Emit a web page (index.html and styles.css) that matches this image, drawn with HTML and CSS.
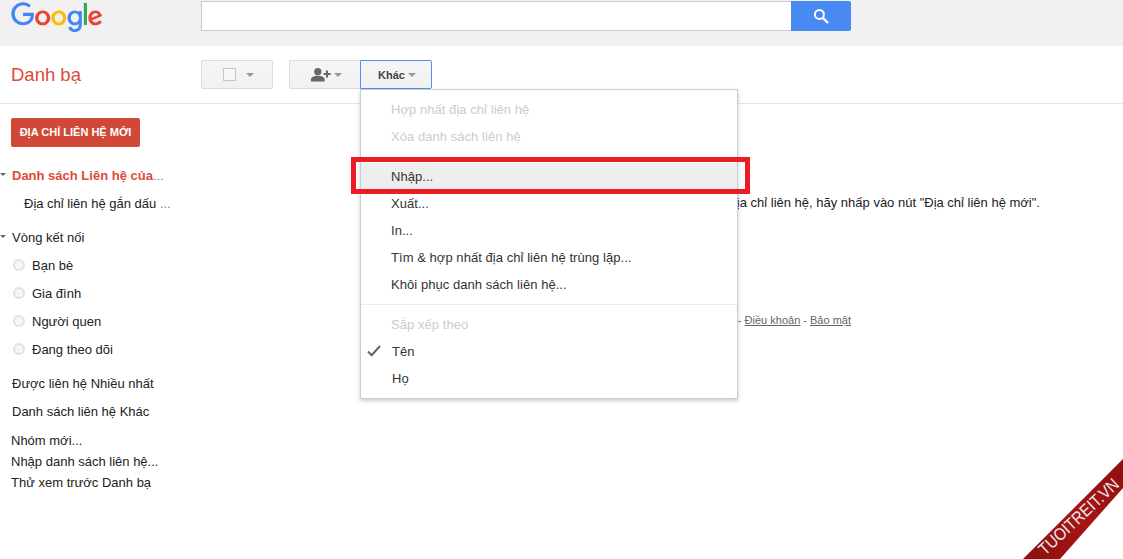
FILE: index.html
```html
<!DOCTYPE html>
<html lang="vi">
<head>
<meta charset="utf-8">
<title>Danh bạ</title>
<link rel="stylesheet" href="styles.css">
</head>
<body>
<div class="page">
  <header class="topbar">
    <svg class="logo" viewBox="0 0 272 92" width="92" height="31" aria-label="Google">
      <path fill="#EA4335" d="M115.75 47.18c0 12.77-9.99 22.18-22.25 22.18s-22.25-9.41-22.25-22.18C71.25 34.32 81.24 25 93.5 25s22.25 9.32 22.25 22.18zm-9.74 0c0-7.98-5.79-13.44-12.51-13.44S80.99 39.2 80.99 47.18c0 7.9 5.79 13.44 12.51 13.44s12.51-5.55 12.51-13.44z"/>
      <path fill="#FBBC05" d="M163.75 47.18c0 12.77-9.99 22.18-22.25 22.18s-22.25-9.41-22.25-22.18c0-12.85 9.99-22.18 22.25-22.18s22.25 9.32 22.25 22.18zm-9.74 0c0-7.98-5.79-13.44-12.51-13.44s-12.51 5.46-12.51 13.44c0 7.9 5.79 13.44 12.51 13.44s12.51-5.55 12.51-13.44z"/>
      <path fill="#4285F4" d="M209.75 26.34v39.82c0 16.38-9.66 23.07-21.08 23.07-10.75 0-17.22-7.19-19.66-13.07l8.48-3.53c1.51 3.61 5.21 7.87 11.17 7.87 7.31 0 11.84-4.51 11.84-13v-3.19h-.34c-2.18 2.69-6.38 5.04-11.68 5.04-11.09 0-21.25-9.66-21.25-22.09 0-12.52 10.16-22.26 21.25-22.26 5.29 0 9.49 2.35 11.68 4.96h.34v-3.61h9.25zm-8.56 20.92c0-7.81-5.21-13.52-11.84-13.52-6.72 0-12.35 5.71-12.35 13.52 0 7.73 5.63 13.36 12.35 13.36 6.63 0 11.84-5.63 11.84-13.36z"/>
      <path fill="#34A853" d="M225 3v65h-9.5V3h9.5z"/>
      <path fill="#EA4335" d="M262.02 54.48l7.56 5.04c-2.44 3.61-8.32 9.83-18.48 9.83-12.6 0-22.01-9.74-22.01-22.18 0-13.19 9.49-22.18 20.92-22.18 11.51 0 17.14 9.16 18.98 14.11l1.01 2.52-29.65 12.28c2.27 4.45 5.8 6.72 10.75 6.72 4.96 0 8.4-2.44 10.92-6.14zm-23.27-7.98l19.82-8.23c-1.09-2.77-4.37-4.7-8.23-4.7-4.95 0-11.84 4.37-11.59 12.93z"/>
      <path fill="#4285F4" d="M35.29 41.41V32H67c.31 1.64.47 3.58.47 5.68 0 7.06-1.93 15.79-8.15 22.01-6.05 6.3-13.78 9.66-24.02 9.66C16.32 69.35.36 53.89.36 34.91.36 15.93 16.32.47 35.3.47c10.5 0 17.98 4.12 23.6 9.49l-6.64 6.64c-4.03-3.78-9.49-6.72-16.97-6.72-13.86 0-24.7 11.17-24.7 25.03 0 13.86 10.84 25.03 24.7 25.03 8.99 0 14.11-3.61 17.39-6.89 2.66-2.66 4.41-6.46 5.1-11.65l-22.49.01z"/>
    </svg>
    <div class="search">
      <div class="search-input"></div>
      <div class="search-btn">
        <svg viewBox="0 0 16 16" width="16" height="16"><circle cx="6.4" cy="6.4" r="4.5" fill="none" stroke="#fff" stroke-width="2"/><path d="M9.8 9.8 15 15" stroke="#fff" stroke-width="2.4" fill="none"/></svg>
      </div>
    </div>
  </header>

  <div class="toolbar">
    <div class="app-title">Danh bạ</div>
    <div class="btn btn-select">
      <span class="checkbox"></span>
      <span class="caret"></span>
    </div>
    <div class="btn-group">
      <div class="btn btn-add">
        <svg viewBox="0 0 21 14" width="21" height="14"><circle cx="6.8" cy="3.7" r="3.6" fill="#666"/><path d="M0 13.6v-2.2c0-2.4 3.2-3.6 6.8-3.6s6.8 1.2 6.8 3.6v2.2z" fill="#666"/><path d="M16 2.5v7M12.6 6h7" stroke="#666" stroke-width="2" fill="none"/></svg>
        <span class="caret"></span>
      </div>
      <div class="btn btn-more">Khác<span class="caret"></span></div>
    </div>
  </div>

  <div class="main">
    <nav class="sidebar">
      <div class="new-contact">ĐỊA CHỈ LIÊN HỆ MỚI</div>
      <div class="group first-group">
        <div class="row row-head row-active"><span class="tri"></span><b>Danh sách Liên hệ của</b><span class="more">...</span></div>
        <div class="row row-sub">Địa chỉ liên hệ gắn dấu <span class="more">...</span></div>
      </div>
      <div class="group">
        <div class="row row-head"><span class="tri"></span>Vòng kết nối</div>
        <div class="row row-circle"><span class="radio"></span>Bạn bè</div>
        <div class="row row-circle"><span class="radio"></span>Gia đình</div>
        <div class="row row-circle"><span class="radio"></span>Người quen</div>
        <div class="row row-circle"><span class="radio"></span>Đang theo dõi</div>
      </div>
      <div class="group">
        <div class="row">Được liên hệ Nhiều nhất</div>
        <div class="row">Danh sách liên hệ Khác</div>
      </div>
      <div class="links">
        <div>Nhóm mới...</div>
        <div>Nhập danh sách liên hệ...</div>
        <div>Thử xem trước Danh bạ</div>
      </div>
    </nav>
    <section class="content">
      <p class="empty">Bạn không có địa chỉ liên hệ nào. Để thêm địa chỉ liên hệ, hãy nhấp vào nút "Địa chỉ liên hệ mới".</p>
      <p class="legal">©2015 Google - <a href="#">Điều khoản</a> - <a href="#">Bảo mật</a></p>
    </section>
  </div>

  <div class="menu">
    <div class="item disabled">Hợp nhất địa chỉ liên hệ</div>
    <div class="item disabled">Xóa danh sách liên hệ</div>
    <div class="sep sep-first"></div>
    <div class="item hover">Nhập...</div>
    <div class="item">Xuất...</div>
    <div class="item">In...</div>
    <div class="item">Tìm &amp; hợp nhất địa chỉ liên hệ trùng lặp...</div>
    <div class="item">Khôi phục danh sách liên hệ...</div>
    <div class="sep"></div>
    <div class="item disabled">Sắp xếp theo</div>
    <div class="item item-sort">
      <svg class="check" viewBox="0 0 14 12" width="14" height="12"><path d="M1 6.5 4.6 10.2 13 1" fill="none" stroke="#666" stroke-width="2"/></svg>Tên
    </div>
    <div class="item item-sort">Họ</div>
  </div>

  <div class="highlight"></div>

  <svg class="ribbon" viewBox="0 0 100 100" width="100" height="100">
    <defs><linearGradient id="rb" x1="0" y1="1" x2="1" y2="0"><stop offset="0" stop-color="#8f0f0f"/><stop offset=".5" stop-color="#a81515"/><stop offset="1" stop-color="#8f0f0f"/></linearGradient></defs>
    <polygon points="0,100 100,0 100,29 37,100" fill="url(#rb)"/>
    <text class="ribbon-text" x="0" y="0" transform="translate(22 97) rotate(-43)" textLength="103" lengthAdjust="spacingAndGlyphs">TUOITREIT.VN</text>
  </svg>
</div>
</body>
</html>
```

FILE: styles.css
```css
html, body {
  margin: 0;
  padding: 0;
  overflow: hidden;
}
body {
  font-family: "Liberation Sans", Arial, sans-serif;
  font-size: 13px;
  color: #222;
  background: #fff;
}
.page {
  position: relative;
  width: 1123px;
  height: 559px;
  overflow: hidden;
}

/* top bar */
.topbar {
  display: flex;
  height: 46px;
  background: #f1f1f1;
  padding-left: 11px;
  box-sizing: border-box;
}
.logo {
  margin-top: 2px;
  flex: none;
}
.search {
  display: flex;
  margin: 1px 0 0 98px;
  height: 30px;
}
.search-input {
  width: 590px;
  box-sizing: border-box;
  background: #fff;
  border: 1px solid #c8c8c8;
  border-right: 0;
  border-radius: 1px 0 0 1px;
}
.search-btn {
  width: 60px;
  background: #4889f4;
  border-radius: 0 2px 2px 0;
  display: flex;
  align-items: center;
  justify-content: center;
}

/* toolbar */
.toolbar {
  display: flex;
  height: 58px;
  box-sizing: border-box;
  border-bottom: 1px solid #e5e5e5;
  padding-top: 14px;
  padding-left: 11px;
}
.app-title {
  width: 190px;
  font-size: 18.5px;
  line-height: 29px;
  color: #dd4b39;
}
.btn {
  box-sizing: border-box;
  height: 29px;
  display: flex;
  align-items: center;
  justify-content: center;
  border: 1px solid #dcdcdc;
  border-radius: 2px;
  background: linear-gradient(#f5f5f5, #f1f1f1);
}
.btn-select {
  width: 72px;
  gap: 10px;
  padding-left: 2px;
  margin-right: 16px;
}
.checkbox {
  width: 11px;
  height: 11px;
  border: 1px solid #c6c6c6;
  background: #f8f8f8;
}
.caret {
  width: 0;
  height: 0;
  border: 4px solid transparent;
  border-top-color: #999;
  border-bottom: 0;
}
.btn-group {
  display: flex;
}
.btn-add {
  width: 71px;
  gap: 2px;
  padding-left: 3px;
  border-right: 0;
  border-radius: 2px 0 0 2px;
}
.btn-more {
  width: 72px;
  gap: 3px;
  padding-left: 2px;
  font-size: 11px;
  font-weight: bold;
  color: #444;
  border-color: #4d90fe;
  border-radius: 0 2px 2px 0;
}

/* main */
.main {
  display: flex;
}
.sidebar {
  width: 201px;
  flex: none;
  box-sizing: border-box;
  padding: 14px 0 0 0;
}
.new-contact {
  margin-left: 11px;
  width: 129px;
  height: 29px;
  line-height: 29px;
  text-align: center;
  border-radius: 2px;
  background: #d14836;
  color: #fff;
  font-size: 11px;
  font-weight: bold;
}
.group {
  margin-top: 6px;
}
.first-group {
  margin-top: 14px;
}
.row {
  display: flex;
  align-items: center;
  height: 28px;
  padding-left: 12px;
  white-space: pre;
}
.row-head {
  position: relative;
}
.row-active {
  color: #dd4b39;
}
.more {
  color: #888;
  font-weight: normal;
}
.row-sub {
  padding-left: 24px;
}
.tri {
  position: absolute;
  left: 0;
  top: 12px;
  width: 0;
  height: 0;
  border: 3.5px solid transparent;
  border-top-color: #666;
  border-bottom: 0;
}
.row-circle {
  padding-left: 13px;
}
.radio {
  width: 8px;
  height: 8px;
  margin-right: 7px;
  border: 2px solid #e2e2e2;
  border-radius: 50%;
  background: #f6f6f6;
}
.links {
  margin: 5px 0 0 11px;
  line-height: 21px;
}

/* content */
.content {
  flex: 1;
  min-width: 0;
}
.empty {
  width: 839px;
  margin: 91px 0 0;
  line-height: 15px;
  text-align: right;
  white-space: nowrap;
}
.legal {
  width: 650px;
  margin: 103px 0 0;
  font-size: 11px;
  line-height: 14px;
  text-align: right;
  color: #666;
}
.legal a {
  color: #666;
}

/* dropdown */
.menu {
  position: absolute;
  left: 360px;
  top: 89px;
  width: 378px;
  box-sizing: border-box;
  padding: 6px 0;
  background: #fff;
  border: 1px solid #ccc;
  box-shadow: 0 2px 4px rgba(0, 0, 0, .2);
}
.item {
  position: relative;
  height: 27px;
  line-height: 27px;
  padding-left: 30px;
  color: #333;
  letter-spacing: .05px;
  white-space: nowrap;
}
.item.disabled {
  color: #ccc;
}
.item.hover {
  background: #eee;
}
.item-sort {
  padding-left: 31px;
}
.check {
  position: absolute;
  left: 6px;
  top: 7px;
}
.sep {
  height: 1px;
  margin: 6px 0;
  background: #ebebeb;
}
.sep-first {
  margin: 7px 0 5px;
}
.highlight {
  position: absolute;
  left: 351px;
  top: 157px;
  width: 399px;
  height: 37px;
  box-sizing: border-box;
  border: 5px solid #ed1c24;
}

/* corner ribbon */
.ribbon {
  position: absolute;
  right: 0;
  bottom: 0;
}
.ribbon-text {
  fill: #e6eeee;
  font-family: "Liberation Sans", Arial, sans-serif;
  font-size: 17px;
}
```
